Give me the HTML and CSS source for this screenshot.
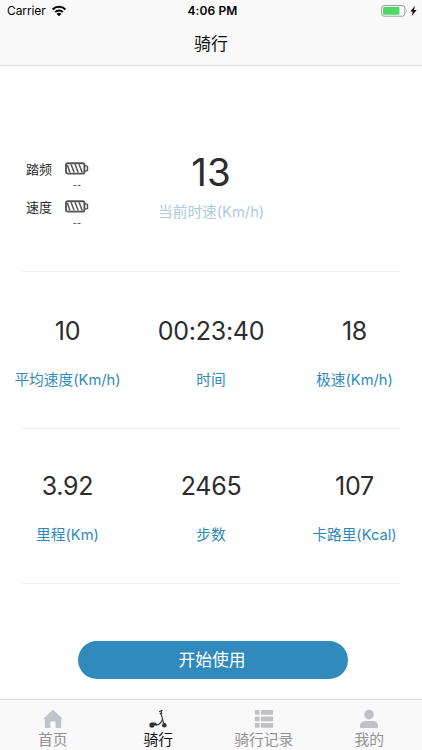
FILE: index.html
```
<!DOCTYPE html>
<html lang="zh-CN">
<head>
    <meta charset="UTF-8">
    <title>骑行</title>
    <link rel="stylesheet" href="styles.css">
</head>
<body>
<div class="app">
    <div class="header">
        <div class="status">
            <div class="carrier">
                <span>Carrier</span>
                <svg width="16" height="12" viewBox="0 0 16 12">
                    <path d="M1.6 4.5a9 9 0 0 1 12.8 0M4.2 7.1a5.4 5.4 0 0 1 7.6 0" fill="none" stroke="#000" stroke-width="2"/>
                    <path d="M8 11.2L5.6 8.9a3.5 3.5 0 0 1 4.8 0z"/>
                </svg>
            </div>
            <div class="clock">4:06 PM</div>
            <div class="power">
                <svg width="37" height="12" viewBox="0 0 37 12">
                    <rect x=".6" y=".6" width="23.2" height="10.6" rx="2.6" fill="#fff" stroke="#999" stroke-width="1"/>
                    <rect x="2" y="2" width="16.5" height="7.8" rx="1" fill="#4cd964"/>
                    <path d="M25 4q1.5 1.8 0 3.8z" fill="#999"/>
                    <path d="M34 .8l-4.6 5.6h2.5l-1.2 4.6 4.9-6h-2.7z"/>
                </svg>
            </div>
        </div>
        <div class="title">骑行</div>
    </div>

    <div class="main">
        <div class="now">
            <div class="sensors">
                <div class="sensor">
                    <span class="sensor-name">踏频</span>
                    <div class="sensor-power">
                        <svg width="24" height="13" viewBox="0 0 24 13">
                            <rect x="1" y="1.2" width="18.4" height="10.4" rx="1.6" fill="#fff" stroke="#555" stroke-width="1.9"/>
                            <path d="M19.5 3.4l3 1v4l-3 1" fill="none" stroke="#555" stroke-width="1.4"/>
                            <path d="M2.4 3l2.5 7.5M6 2.2l3.2 8.4M10 2.2l3.2 8.4M14 2.2l3.2 8.4" stroke="#555" stroke-width="1.5"/>
                        </svg>
                        <span>--</span>
                    </div>
                </div>
                <div class="sensor">
                    <span class="sensor-name">速度</span>
                    <div class="sensor-power">
                        <svg width="24" height="13" viewBox="0 0 24 13">
                            <rect x="1" y="1.2" width="18.4" height="10.4" rx="1.6" fill="#fff" stroke="#555" stroke-width="1.9"/>
                            <path d="M19.5 3.4l3 1v4l-3 1" fill="none" stroke="#555" stroke-width="1.4"/>
                            <path d="M2.4 3l2.5 7.5M6 2.2l3.2 8.4M10 2.2l3.2 8.4M14 2.2l3.2 8.4" stroke="#555" stroke-width="1.5"/>
                        </svg>
                        <span>--</span>
                    </div>
                </div>
            </div>
            <div class="speed">
                <div class="speed-num">13</div>
                <div class="speed-label">当前时速(Km/h)</div>
            </div>
        </div>

        <div class="row">
            <div class="item">
                <div class="num">10</div>
                <div class="label">平均速度(Km/h)</div>
            </div>
            <div class="item">
                <div class="num">00:23:40</div>
                <div class="label">时间</div>
            </div>
            <div class="item">
                <div class="num">18</div>
                <div class="label">极速(Km/h)</div>
            </div>
        </div>

        <div class="row row-last">
            <div class="item">
                <div class="num">3.92</div>
                <div class="label">里程(Km)</div>
            </div>
            <div class="item">
                <div class="num">2465</div>
                <div class="label">步数</div>
            </div>
            <div class="item">
                <div class="num">107</div>
                <div class="label">卡路里(Kcal)</div>
            </div>
        </div>

        <button class="start">开始使用</button>
    </div>

    <div class="tabs">
        <div class="tab">
            <svg width="20" height="20" viewBox="0 0 20 20">
                <path d="M10 .8L.8 9.3v1h1v7.5q0 1.2 1.2 1.2h4.4v-5.5q0-1.2 1.2-1.2h2.8q1.2 0 1.2 1.2V19H17q1.2 0 1.2-1.2v-7.5h1v-1z" fill="#c0c3ca"/>
            </svg>
            <span>首页</span>
        </div>
        <div class="tab current">
            <svg width="20" height="20" viewBox="0 0 20 20">
                <g fill="none" stroke="#333" stroke-linecap="round">
                    <path d="M11.5 2.6l2.8-1.4M12.2 4.6l1.8-.4M13.4 1.7l-.3 3.3 2.6 9.5" stroke-width="1.1"/>
                    <path d="M7.2 14.4q1.4 2.2 3.2 1.2 2.6-1 3.8-4.6" stroke-width="1.2"/>
                </g>
                <circle cx="3.9" cy="16.1" r="2.6" fill="#333"/>
                <path d="M4 13.6l4 .2 1.2 2.6H5z" fill="#333"/>
                <circle cx="16.3" cy="16.3" r="2.3" fill="#333"/>
            </svg>
            <span>骑行</span>
        </div>
        <div class="tab">
            <svg width="20" height="20" viewBox="0 0 20 20" fill="#c0c0c8">
                <rect x=".8" y="1" width="4.8" height="4.8" rx="1"/>
                <rect x="6.8" y="1" width="12.4" height="4.8" rx="1"/>
                <rect x=".8" y="7.4" width="4.8" height="4.8" rx="1"/>
                <rect x="6.8" y="7.4" width="12.4" height="4.8" rx="1"/>
                <rect x=".8" y="13.9" width="4.8" height="4.8" rx="1"/>
                <rect x="6.8" y="13.9" width="12.4" height="4.8" rx="1"/>
            </svg>
            <span>骑行记录</span>
        </div>
        <div class="tab">
            <svg width="20" height="20" viewBox="0 0 20 20" fill="#c0c0c8">
                <circle cx="10" cy="5.6" r="4.8"/>
                <path d="M.8 17.8q0-5.8 6-5.8h6.4q6 0 6 5.8 0 1.2-1.2 1.2H2q-1.2 0-1.2-1.2z"/>
            </svg>
            <span>我的</span>
        </div>
    </div>
</div>
</body>
</html>
```
FILE: styles.css
```
* {
    margin: 0;
    padding: 0;
    box-sizing: border-box;
}

body {
    font-family: Inter, "Noto Sans CJK SC", sans-serif;
    color: #2c2c2e;
    background: #fff;
}

svg {
    display: block;
}

.app {
    display: flex;
    flex-direction: column;
    width: 422px;
    height: 750px;
    overflow: hidden;
}

.header {
    height: 66px;
    background: #f9f9f9;
    border-bottom: 1px solid #d9d9d9;
}

.status {
    display: grid;
    grid-template-columns: 1fr auto 1fr;
    align-items: center;
    height: 21px;
    padding: 0 4px 0 7px;
    color: #000;
    font-size: 12px;
}

.carrier {
    display: flex;
    align-items: center;
    gap: 5px;
    letter-spacing: -0.1px;
}

.clock {
    font-weight: 600;
    letter-spacing: 0.1px;
}

.power {
    display: flex;
    justify-content: flex-end;
}

.title {
    color: #111;
    font-size: 17px;
    line-height: 46px;
    text-align: center;
}

.main {
    flex: 1;
}

.now {
    display: grid;
    grid-template-columns: 1fr 106px 1fr;
    height: 206px;
    margin: 0 22px;
    padding-top: 80px;
    border-bottom: 1px solid #efefef;
}

.sensors {
    padding: 16px 0 0 4px;
}

.sensor {
    display: flex;
    height: 38px;
    font-size: 13px;
}

.sensor-name {
    width: 39px;
    line-height: 14px;
}

.sensor-power {
    display: flex;
    flex-direction: column;
    align-items: center;
    width: 24px;
}

.sensor-power span {
    font-size: 9px;
    line-height: 20px;
}

.speed {
    text-align: center;
    white-space: nowrap;
}

.speed-num {
    font-size: 38.5px;
    line-height: 52px;
}

.speed-label {
    margin-top: 3px;
    color: #acc9df;
    font-size: 14.7px;
    line-height: 22px;
}

.row {
    display: grid;
    grid-template-columns: repeat(3, 143.5px);
    justify-content: center;
    position: relative;
    height: 157px;
    padding-top: 43px;
    text-align: center;
    white-space: nowrap;
}

.row-last {
    height: 155px;
    padding-top: 41px;
}

.row::after {
    content: "";
    position: absolute;
    left: 22px;
    right: 22px;
    bottom: 0;
    height: 1px;
    background: #efefef;
}

.num {
    font-size: 25px;
    line-height: 32px;
    letter-spacing: -0.25px;
}

.label {
    margin-top: 21px;
    color: #3089bb;
    font-size: 14.7px;
    line-height: 24px;
}

.start {
    display: block;
    width: 270px;
    height: 38px;
    margin: 57px auto 0 78px;
    border: none;
    border-radius: 19px;
    background: #308abc;
    color: #fff;
    font-family: inherit;
    font-size: 16.8px;
    line-height: 38px;
    padding-right: 2px;
}

.tabs {
    display: grid;
    grid-template-columns: repeat(4, 1fr);
    height: 51px;
    padding-top: 9px;
    border-top: 1px solid #d9d9d9;
    background: #f9f9f9;
}

.tab {
    display: flex;
    flex-direction: column;
    align-items: center;
    color: #929292;
    font-size: 14.8px;
    line-height: 22px;
}

.tab.current {
    color: #111;
}
```
